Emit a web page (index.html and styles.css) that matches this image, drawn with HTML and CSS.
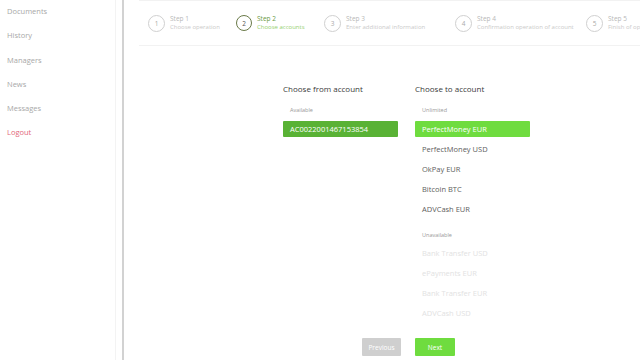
FILE: index.html
```html
<!DOCTYPE html>
<html lang="en">
<head>
    <meta charset="UTF-8">
    <title>Choose accounts</title>
    <link rel="stylesheet" href="styles.css">
</head>
<body>
    <div class="sidebar">
        <a class="nav-item">Documents</a>
        <a class="nav-item">History</a>
        <a class="nav-item">Managers</a>
        <a class="nav-item">News</a>
        <a class="nav-item">Messages</a>
        <a class="nav-item logout">Logout</a>
    </div>

    <div class="main">
        <div class="steps">
            <div class="step step-1">
                <span class="step-num">1</span>
                <div class="step-text"><div class="step-title">Step 1</div><div class="step-desc">Choose operation</div></div>
            </div>
            <div class="step step-2 active">
                <span class="step-num">2</span>
                <div class="step-text"><div class="step-title">Step 2</div><div class="step-desc">Choose accounts</div></div>
            </div>
            <div class="step step-3">
                <span class="step-num">3</span>
                <div class="step-text"><div class="step-title">Step 3</div><div class="step-desc">Enter additional information</div></div>
            </div>
            <div class="step step-4">
                <span class="step-num">4</span>
                <div class="step-text"><div class="step-title">Step 4</div><div class="step-desc">Confirmation operation of account</div></div>
            </div>
            <div class="step step-5">
                <span class="step-num">5</span>
                <div class="step-text"><div class="step-title">Step 5</div><div class="step-desc">Finish of operation</div></div>
            </div>
        </div>

        <div class="accounts">
            <div class="account-col">
                <h2>Choose from account</h2>
                <div class="group-label">Available</div>
                <div class="account selected-dark">AC0022001467153854</div>
            </div>
            <div class="account-col">
                <h2>Choose to account</h2>
                <div class="group-label">Unlimited</div>
                <div class="account selected">PerfectMoney EUR</div>
                <div class="account">PerfectMoney USD</div>
                <div class="account">OkPay EUR</div>
                <div class="account">Bitcoin BTC</div>
                <div class="account">ADVCash EUR</div>
                <div class="group-label unavailable-label">Unavailable</div>
                <div class="account disabled">Bank Transfer USD</div>
                <div class="account disabled">ePayments EUR</div>
                <div class="account disabled">Bank Transfer EUR</div>
                <div class="account disabled">ADVCash USD</div>
            </div>
        </div>

        <div class="buttons">
            <button class="btn btn-prev">Previous</button>
            <button class="btn btn-next">Next</button>
        </div>
    </div>
</body>
</html>
```

FILE: styles.css
```css
body {
    margin: 0;
    font-family: "Open Sans", "Liberation Sans", sans-serif;
    background-color: #fff;
    display: flex;
    height: 360px;
    overflow: hidden;
}
.sidebar {
    width: 115px;
    padding-top: 5px;
    border-right: 1px solid #f3f3f3;
    margin-right: 6px;
    display: flex;
    flex-direction: column;
    position: relative;
}
.sidebar::after {
    content: "";
    position: absolute;
    top: 0;
    bottom: 0;
    right: -9px;
    width: 2px;
    background-color: #d2d2d2;
}
.nav-item {
    display: block;
    height: 24.3px;
    line-height: 12px;
    padding-left: 7px;
    font-size: 7.5px;
    color: #a8a8a8;
}
.nav-item.logout {
    color: #e2677a;
}
.main {
    flex: 1;
    margin-left: 3px;
    display: flex;
    flex-direction: column;
    min-width: 0;
}
.steps {
    display: flex;
    margin-left: 14px;
    padding-left: 9px;
    height: 44px;
    align-items: center;
    border-top: 1px solid #f2f2f2;
    border-bottom: 1px solid #f2f2f2;
    white-space: nowrap;
    overflow: hidden;
}
.step {
    display: flex;
    align-items: center;
    flex-shrink: 0;
}
.step-1, .step-2 { width: 88px; }
.step-3, .step-4 { width: 131px; }
.step-num {
    width: 15px;
    height: 15px;
    border: 1px solid #d0d0d0;
    border-radius: 50%;
    display: flex;
    align-items: center;
    justify-content: center;
    font-size: 6.5px;
    color: #aaa;
    margin-right: 5px;
    flex-shrink: 0;
}
.step-title {
    font-size: 6.5px;
    line-height: 9px;
    color: #b8b8b8;
}
.step-desc {
    font-size: 6px;
    line-height: 9px;
    color: #cacaca;
}
.step.active .step-num {
    border: 1.5px solid #6a7a48;
    width: 14px;
    height: 14px;
    color: #555;
}
.step.active .step-title {
    color: #6b9a3f;
}
.step.active .step-desc {
    color: #96d06e;
}
.accounts {
    display: flex;
    gap: 17px;
    padding-left: 158px;
    margin-top: 38px;
}
.account-col {
    width: 115px;
}
h2 {
    margin: 0;
    font-size: 8px;
    line-height: 10px;
    font-weight: normal;
    color: #3a3a3a;
}
.group-label {
    margin-top: 10px;
    margin-bottom: 5px;
    height: 12px;
    line-height: 12px;
    padding-left: 7px;
    font-size: 5.5px;
    color: #999;
}
.unavailable-label {
    margin-top: 12px;
    margin-bottom: 4px;
}
.account {
    height: 16px;
    line-height: 16px;
    margin-bottom: 4px;
    padding-left: 7px;
    font-size: 7.5px;
    color: #606060;
    border-radius: 1px;
}
.account.selected {
    background-color: #6fdc3f;
    color: #fff;
}
.account.selected-dark {
    background-color: #59b235;
    color: #fff;
}
.account.disabled {
    color: #e2e2e2;
}
.buttons {
    display: flex;
    gap: 14px;
    padding-left: 237px;
    margin-top: 13px;
}
.btn {
    height: 18px;
    border: none;
    border-radius: 1px;
    color: #fff;
    font-family: inherit;
    font-size: 6.5px;
    padding: 0;
}
.btn-prev {
    width: 39px;
    background-color: #cfcfcf;
}
.btn-next {
    width: 40px;
    background-color: #6fdc3f;
}
```
